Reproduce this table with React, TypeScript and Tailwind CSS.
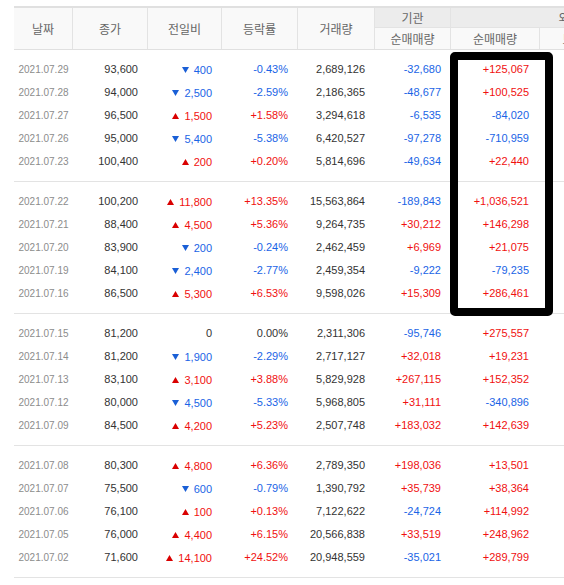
type Row = [string, string, string, string, string, string, string];

const GROUPS: Row[][] = [
  [
    ["2021.07.29", "93,600", "-400", "-0.43%", "2,689,126", "-32,680", "+125,067"],
    ["2021.07.28", "94,000", "-2,500", "-2.59%", "2,186,365", "-48,677", "+100,525"],
    ["2021.07.27", "96,500", "+1,500", "+1.58%", "3,294,618", "-6,535", "-84,020"],
    ["2021.07.26", "95,000", "-5,400", "-5.38%", "6,420,527", "-97,278", "-710,959"],
    ["2021.07.23", "100,400", "+200", "+0.20%", "5,814,696", "-49,634", "+22,440"],
  ],
  [
    ["2021.07.22", "100,200", "+11,800", "+13.35%", "15,563,864", "-189,843", "+1,036,521"],
    ["2021.07.21", "88,400", "+4,500", "+5.36%", "9,264,735", "+30,212", "+146,298"],
    ["2021.07.20", "83,900", "-200", "-0.24%", "2,462,459", "+6,969", "+21,075"],
    ["2021.07.19", "84,100", "-2,400", "-2.77%", "2,459,354", "-9,222", "-79,235"],
    ["2021.07.16", "86,500", "+5,300", "+6.53%", "9,598,026", "+15,309", "+286,461"],
  ],
  [
    ["2021.07.15", "81,200", "0", "0.00%", "2,311,306", "-95,746", "+275,557"],
    ["2021.07.14", "81,200", "-1,900", "-2.29%", "2,717,127", "+32,018", "+19,231"],
    ["2021.07.13", "83,100", "+3,100", "+3.88%", "5,829,928", "+267,115", "+152,352"],
    ["2021.07.12", "80,000", "-4,500", "-5.33%", "5,968,805", "+31,111", "-340,896"],
    ["2021.07.09", "84,500", "+4,200", "+5.23%", "2,507,748", "+183,032", "+142,639"],
  ],
  [
    ["2021.07.08", "80,300", "+4,800", "+6.36%", "2,789,350", "+198,036", "+13,501"],
    ["2021.07.07", "75,500", "-600", "-0.79%", "1,390,792", "+35,739", "+38,364"],
    ["2021.07.06", "76,100", "+100", "+0.13%", "7,122,622", "-24,724", "+114,992"],
    ["2021.07.05", "76,000", "+4,400", "+6.15%", "20,566,838", "+33,519", "+248,962"],
    ["2021.07.02", "71,600", "+14,100", "+24.52%", "20,948,559", "-35,021", "+289,799"],
  ],
];

const COLS = "grid grid-cols-[59px_75px_74px_76px_77px_76px_89px_90px_70px]";

function tone(v: string) {
  if (v.startsWith("+")) return "text-[#f01010]";
  if (v.startsWith("-")) return "text-[#1a64e6]";
  return "text-[#333]";
}

function Change({ v }: { v: string }) {
  if (v === "0") return <span className="text-[#333]">0</span>;
  const up = v.startsWith("+");
  return (
    <span className={`inline-flex items-center gap-[5px] ${up ? "text-[#f01010]" : "text-[#1a64e6]"}`}>
      <svg width="7" height="6" viewBox="0 0 7 6">
        {up
          ? <polygon points="3.5,0 7,6 0,6" fill="#d90000" />
          : <polygon points="0,0 7,0 3.5,6" fill="#1a5fd6" />}
      </svg>
      {v.slice(1)}
    </span>
  );
}

export default function App() {
  const hd = "flex items-center justify-center border-r border-[#e3e3e3] text-[12px] text-[#666]";
  return (
    <div
      className="relative w-[564px] h-[585px] overflow-hidden bg-white pt-[6px] pl-[14px]"
      style={{ fontFamily: '"Liberation Sans", "Noto Sans CJK KR", sans-serif' }}
    >
      <div className="w-[686px]">
        {/* Header */}
        <div
          className={`${COLS} grid-rows-[20px_21px] border-t-2 border-b border-[#e0e0e0] bg-[#f9f9f9]`}
          style={{ fontFamily: '"Noto Sans CJK KR", sans-serif' }}
        >
          <div className={`${hd} row-span-2`}>날짜</div>
          <div className={`${hd} row-span-2`}>종가</div>
          <div className={`${hd} row-span-2`}>전일비</div>
          <div className={`${hd} row-span-2`}>등락률</div>
          <div className={`${hd} row-span-2`}>거래량</div>
          <div className={`${hd} bg-[#ececec] border-b border-[#e3e3e3]`}>기관</div>
          <div className={`${hd} col-span-3 bg-[#ececec] border-b border-[#e3e3e3]`}>외국인</div>
          <div className={hd}>순매매량</div>
          <div className={hd}>순매매량</div>
          <div className={hd}>보유주수</div>
          <div className={hd}>보유율</div>
        </div>

        {/* Body */}
        {GROUPS.map((rows, gi) => (
          <div key={gi} className="border-b border-[#e3e3e3] py-2">
            {rows.map((r) => (
              <div key={r[0]} className={`${COLS} h-[23px] items-center text-[11px]`}>
                <div className="text-center text-[10px] text-[#8c8c8c]">{r[0]}</div>
                <div className="text-right pr-[10px] text-[#333]">{r[1]}</div>
                <div className="text-right pr-[10px]"><Change v={r[2]} /></div>
                <div className={`text-right pr-[10px] ${tone(r[3])}`}>{r[3]}</div>
                <div className="text-right pr-[10px] text-[#333]">{r[4]}</div>
                <div className={`text-right pr-[10px] ${tone(r[5])}`}>{r[5]}</div>
                <div className={`text-right pr-[11px] ${tone(r[6])}`}>{r[6]}</div>
                <div />
                <div />
              </div>
            ))}
          </div>
        ))}
      </div>

      {/* highlight box */}
      <div className="absolute left-[450px] top-[52px] w-[103px] h-[264px] border-8 border-black rounded-[5px]" />
    </div>
  );
}
